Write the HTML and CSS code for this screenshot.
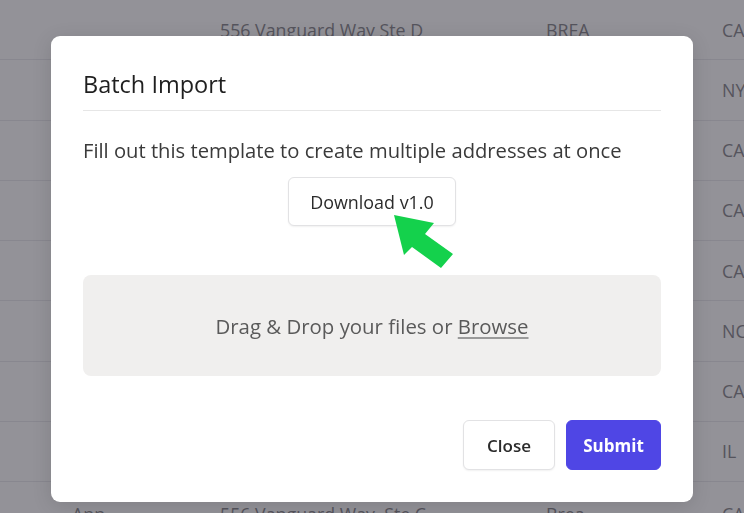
FILE: index.html
```html
<!DOCTYPE html>
<html lang="en">
<head>
<meta charset="utf-8">
<title>Batch Import</title>
<link rel="stylesheet" href="styles.css">
</head>
<body>
<div class="table">
  <div class="row"><span class="c1"></span><span class="c2">556 Vanguard Way Ste D</span><span class="c3">BREA</span><span class="c4">CA</span></div>
  <div class="row"><span class="c1"></span><span class="c2"></span><span class="c3"></span><span class="c4">NY</span></div>
  <div class="row"><span class="c1"></span><span class="c2"></span><span class="c3"></span><span class="c4">CA</span></div>
  <div class="row"><span class="c1"></span><span class="c2"></span><span class="c3"></span><span class="c4">CA</span></div>
  <div class="row"><span class="c1"></span><span class="c2"></span><span class="c3"></span><span class="c4">CA</span></div>
  <div class="row"><span class="c1"></span><span class="c2"></span><span class="c3"></span><span class="c4">NC</span></div>
  <div class="row"><span class="c1"></span><span class="c2"></span><span class="c3"></span><span class="c4">CA</span></div>
  <div class="row"><span class="c1"></span><span class="c2"></span><span class="c3"></span><span class="c4">IL</span></div>
  <div class="row last"><span class="c1">Ann</span><span class="c2">556 Vanguard Way, Ste C</span><span class="c3">Brea</span><span class="c4">CA</span></div>
</div>
<div class="overlay"></div>
<div class="modal">
  <h2 class="title">Batch Import</h2>
  <p class="desc">Fill out this template to create multiple addresses at once</p>
  <div class="dl-wrap">
    <button class="btn btn-light dl">Download v1.0</button>
  </div>
  <div class="drop">Drag &amp; Drop your files or&nbsp;<span class="browse">Browse</span></div>
  <div class="footer">
    <button class="btn btn-light close">Close</button>
    <button class="btn btn-primary">Submit</button>
  </div>
  <svg class="arrow" width="70" height="64" viewBox="0 0 70 64"><polygon points="3,3 43,11 34,22 62,42 50,56 21,35 13,43" fill="#14d14c"/></svg>
</div>
</body>
</html>
```
FILE: styles.css
```css
* { box-sizing: border-box; }
html, body { margin: 0; padding: 0; }
body {
  width: 744px;
  height: 513px;
  overflow: hidden;
  background: #ffffff;
  font-family: "Open Sans", "Noto Sans", sans-serif;
  position: relative;
}
.table { display: flex; flex-direction: column; }
.row {
  height: 60.25px;
  flex-shrink: 0;
  border-bottom: 1px solid #e9e9ec;
  display: flex;
  align-items: center;
  font-size: 17.8px;
  color: #838388;
  white-space: nowrap;
}
.row.last { align-items: flex-end; height: 31px; overflow: hidden; border-bottom: none; }
.row.last span { line-height: 22px; margin-bottom: -12px; }
.row span { flex-shrink: 0; }
.c1 { width: 220px; padding-left: 72px; }
.c2 { width: 326px; }
.c3 { width: 176px; }
.c4 { width: 40px; }
.overlay {
  position: fixed;
  inset: 0;
  background: rgba(40, 38, 50, 0.5);
}
.modal {
  position: absolute;
  left: 51px;
  top: 36px;
  width: 642px;
  height: 466px;
  background: #fff;
  border-radius: 9px;
  padding: 32px 32px 32px;
  display: flex;
  flex-direction: column;
  box-shadow: 0 4px 20px rgba(0,0,0,0.12);
}
.title {
  margin: 0;
  font-size: 23.5px;
  font-weight: 500;
  color: #1f1f1f;
  line-height: 32px;
  padding-bottom: 10px;
  border-bottom: 1px solid #e6e6e6;
}
.desc {
  margin: 25px 0 0;
  font-size: 20.2px;
  line-height: 28px;
  color: #3a3a3a;
}
.dl-wrap { display: flex; justify-content: center; margin-top: 13px; }
.btn {
  font-family: inherit;
  height: 50px;
  border-radius: 6px;
  font-size: 17px;
  cursor: pointer;
}
.btn-light {
  background: #fff;
  border: 1px solid #e2e2e4;
  color: #2b2b2b;
  box-shadow: 0 1px 2px rgba(0,0,0,0.06);
}
.dl { width: 168px; height: 49px; margin-left: 0; font-weight: 500; font-size: 17.9px; }
.drop {
  margin-top: 49px;
  height: 101px;
  background: #f0efee;
  border-radius: 8px;
  display: flex;
  align-items: center;
  justify-content: center;
  font-size: 20.4px;
  color: #5a5a5a;
}
.browse { text-decoration: underline; text-decoration-color: #9a9a9a; text-underline-offset: 3px; }
.footer {
  margin-top: auto;
  display: flex;
  justify-content: flex-end;
  gap: 11px;
}
.close { width: 92px; font-weight: 600; }
.btn-primary {
  width: 95px;
  background: #4f46e5;
  border: 1px solid #4f46e5;
  color: #fff;
  font-weight: 700;
}
.arrow {
  position: absolute;
  left: 340px;
  top: 176px;
}
```
